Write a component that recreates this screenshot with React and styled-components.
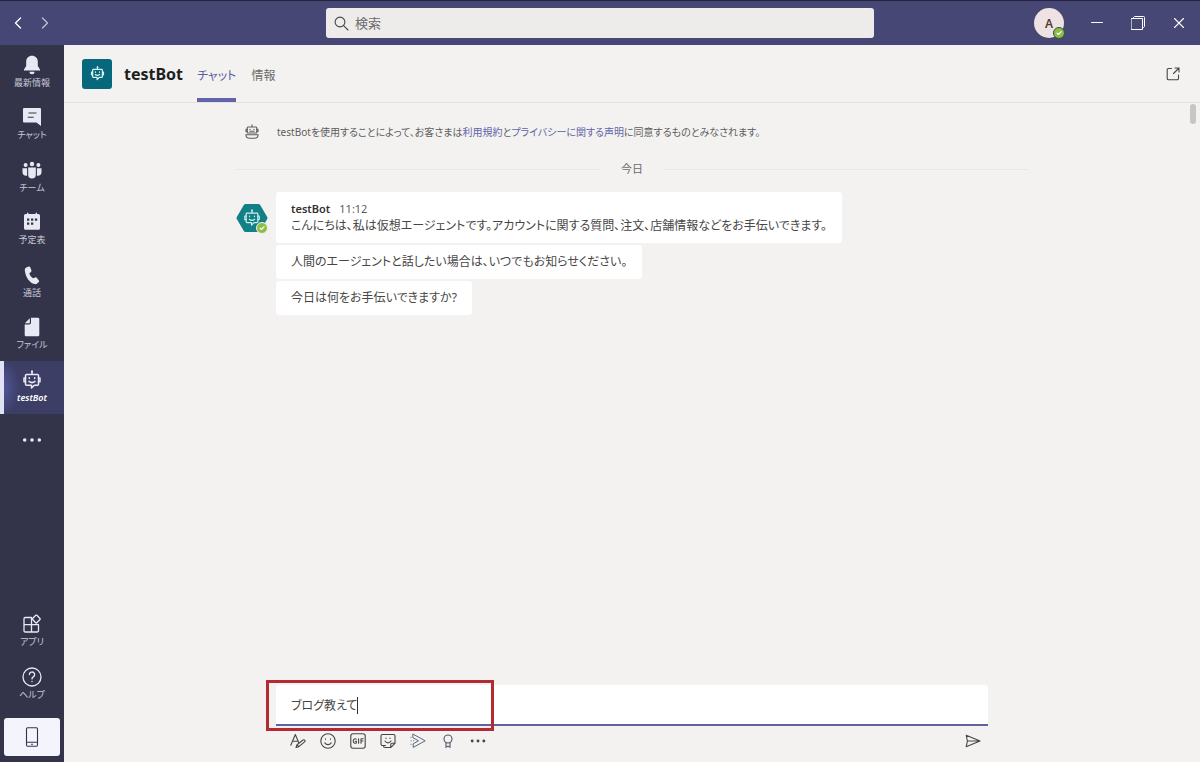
import { useState } from "react";
import styled, { createGlobalStyle } from "styled-components";

const GlobalStyle = createGlobalStyle`
  * {
    box-sizing: border-box;
  }
  body {
    margin: 0;
    background: #f3f2f1;
    color: #484644;
    font-family: "Noto Sans", "Noto Sans CJK JP", sans-serif;
    font-feature-settings: "palt";
    font-size: 12px;
  }
  button, input {
    font: inherit;
    font-feature-settings: inherit;
    color: inherit;
    border: 0;
    padding: 0;
    margin: 0;
    background: none;
  }
  a {
    color: #6264a7;
    text-decoration: none;
  }
  svg {
    display: block;
  }
`;

/* ---------- icons ---------- */

const Line = ({ size = 18, box = 20, width = 1.2, children }) => (
  <svg width={size} height={size} viewBox={`0 0 ${box} ${box}`} fill="none" stroke="currentColor" strokeWidth={width} strokeLinecap="round" strokeLinejoin="round" aria-hidden="true">
    {children}
  </svg>
);

const Solid = ({ size = 20, children }) => (
  <svg width={size} height={size} viewBox="0 0 20 20" fill="currentColor" aria-hidden="true">
    {children}
  </svg>
);

const BellIcon = () => (
  <Solid>
    <path d="M10 .8c-3.4 0-5.8 2.4-5.8 5.8v4.5L2 14.4v1h16v-1l-2.2-3.3V6.6C15.8 3.2 13.4.8 10 .8zM7.5 16.7a2.5 2.5 0 0 0 5 0z" />
  </Solid>
);

const ChatIcon = () => (
  <Solid>
    <path fillRule="evenodd" d="M2 1h16a1 1 0 0 1 1 1v17l-4.500-3.500H2a1 1 0 0 1-1-1V2a1 1 0 0 1 1-1zm4.500 4.600v1h8v-1zm-.800 4.200v1h6v-1z" />
  </Solid>
);

const TeamIcon = () => (
  <Solid>
    <circle cx="3.6" cy="5" r="2" />
    <circle cx="10" cy="4" r="2.2" />
    <circle cx="16.4" cy="5" r="2" />
    <path d="M6.200 7.500h7.600v7.300a3.800 3.800 0 0 1-7.600 0zM.5 8.300h4.600v7.400C2.300 16.200.5 14.500.5 12.200zM14.900 8.300h4.600v3.900c0 2.300-1.800 4-4.600 3.500z" />
  </Solid>
);

const CalendarIcon = () => (
  <Solid>
    <path fillRule="evenodd" d="M5 .8h1.400V2h7.200V.8H15V2h1.500A1.500 1.500 0 0 1 18 3.500v12.700a1.500 1.500 0 0 1-1.500 1.500h-13A1.500 1.500 0 0 1 2 16.200V3.500A1.500 1.500 0 0 1 3.500 2H5zM9 6.400v2.300h2.300V6.400zm3.900 0v2.300h2.300V6.400zM5 10.500v2.300h2.300v-2.300zm4 0v2.300h2.300v-2.300zM5 6.400v2.300h2.300V6.400z" />
  </Solid>
);

const PhoneIcon = () => (
  <Solid>
    <path d="M4.300 2.400 6.600 1.500c.7-.2 1.200 0 1.500.6l1.300 3.200c.2.600.1 1.100-.3 1.500L7.300 8.500c.7 2 1.900 3.500 3.700 4.700l2.200-.8c.6-.2 1.100-.1 1.500.4l2.200 2.700c.4.6.3 1.200-.2 1.600l-1.500 1.400c-.8.700-1.700.9-2.700.6C7.600 17.600 3.700 12.500 2.800 5.400c-.1-1.400.4-2.500 1.500-3z" />
  </Solid>
);

const FileIcon = () => (
  <Solid>
    <path d="M9 .8h7A1.300 1.300 0 0 1 17.300 2v16a1.300 1.300 0 0 1-1.300 1.300H4A1.300 1.300 0 0 1 2.700 18V7.600h4.500A1.800 1.800 0 0 0 9 5.800z" />
    <path d="M7.800 1.200v4.200a.9.900 0 0 1-.9.900H2.900z" />
  </Solid>
);

const BotIcon = ({ size = 20, width = 1.5 }) => (
  <Line size={size} width={width}>
    <path d="M10 1.200v3" />
    <circle cx="10" cy="1.600" r=".4" />
    <path d="M4.500 4.500h11a1 1 0 0 1 1 1v8.700a1 1 0 0 1-1 1h-3.200L9.500 18v-2.800h-5a1 1 0 0 1-1-1V5.500a1 1 0 0 1 1-1z" />
    <path d="M3.500 8H2v3.800h1.500M16.500 8H18v3.800h-1.500" />
    <path d="M7.300 7.800v.6M12.700 7.800v.6M7 11.400c1.700 1.400 4.300 1.400 6 0" />
  </Line>
);

const NoticeBotIcon = () => (
  <Line size={16} box={16} width={1.1}>
    <path d="M8 .8v2M4 3h8a.7.7 0 0 1 .7.700V9H3.300V3.700A.7.7 0 0 1 4 3zM3 5.200H2v2.200h1M13 5.200h1v2.200h-1" />
    <path d="M6 5.300v.4M10 5.300v.4M6 7.300h4" />
    <path d="M1.800 10.800h12.400c-.2 2.400-1.700 3.400-3.600 3.400H5.400c-1.900 0-3.400-1-3.600-3.400z" />
  </Line>
);

const DotsIcon = ({ size = 20 }) => (
  <Solid size={size}>
    <circle cx="2.700" cy="10" r="1.800" />
    <circle cx="10" cy="10" r="1.800" />
    <circle cx="17.300" cy="10" r="1.800" />
  </Solid>
);

const AppsIcon = () => (
  <Line size={20} width={1.3}>
    <path d="M9.500 3.500H3.200A1.200 1.200 0 0 0 2 4.700v12.100A1.200 1.200 0 0 0 3.200 18h12.100a1.200 1.200 0 0 0 1.200-1.200v-6.200H2M9.500 3.500V18" />
    <rect x="11.300" y="2" width="6" height="6" rx=".8" transform="rotate(45 14.300 5)" />
  </Line>
);

const HelpIcon = () => (
  <Line size={20} width={1.3}>
    <circle cx="10" cy="10" r="9" />
    <path d="M7.400 7.600a2.600 2.600 0 1 1 3.800 2.300c-.8.500-1.200 1-1.200 2M10 14.400v.3" />
  </Line>
);

const MobileIcon = () => (
  <Line size={20} width={1.1}>
    <rect x="4.500" y=".8" width="11" height="18.400" rx="1.200" />
    <path d="M4.500 15.200h11M9.500 17.200h1" />
  </Line>
);

const SearchIcon = () => (
  <Line size={15} box={15} width={1.1}>
    <circle cx="6" cy="6" r="4.900" />
    <path d="m9.600 9.600 4.400 4.400" />
  </Line>
);

const PopOutIcon = () => (
  <Line size={14} box={14} width={1.1}>
    <path d="M5.500 1.500h-3A1.300 1.300 0 0 0 1.200 2.800v8.700a1.300 1.300 0 0 0 1.300 1.300h8.700a1.300 1.300 0 0 0 1.300-1.300V8M7.500 6.500 13 1M9 1h4v4" />
  </Line>
);

const FormatIcon = () => (
  <Line size={16} box={16} width={1.1}>
    <path d="M.8 12.300 5.300 1.500l3.400 8M2.600 8.300H8M6 14.500l1-2.800 6-4.700c1.400-.8 2.700.7 1.600 1.900l-5.800 4.800zM7 11.700l1.800 2" />
  </Line>
);

const SmileIcon = () => (
  <Line size={16} box={16} width={1.1}>
    <circle cx="8" cy="8" r="7.200" />
    <path d="M5.500 5.800v.5M10.500 5.800v.5M4.800 9.900c1.700 2.300 4.700 2.300 6.400 0" />
  </Line>
);

const GifIcon = () => (
  <Line size={16} box={16} width={1.1}>
    <rect x=".8" y=".8" width="14.400" height="14.400" rx="2.200" />
    <path d="M6.300 6.200C5.200 5.200 3.200 5.900 3.200 8s2 2.800 3.200 1.900V8.200H5.200M8.600 5.800v4.400M11 10.200V5.800h2.200M11 8h1.900" />
  </Line>
);

const StickerIcon = () => (
  <Line size={16} box={16} width={1.1}>
    <path d="M2.500 1.500h11a1.500 1.500 0 0 1 1.500 1.500v7.300l-4.300 4.200H5A1.500 1.500 0 0 1 3.500 13M2.500 1.500A1.500 1.500 0 0 0 1 3v8a1.500 1.500 0 0 0 1.500 1.500h3M15 10.300h-2.800a1.500 1.500 0 0 0-1.500 1.500v2.700" />
    <path d="M6 5v.5M10 5v.5M5 8c1.500 2.500 4.500 2.500 6 0" />
  </Line>
);

const StreamIcon = () => (
  <Line size={16} box={16} width={1}>
    <path d="M3.200 1.200 15.200 7.800 3.200 14.400v-3.600l5.300-3-5.300-3zM1 4.300v.2M1 7.800h.2M3.600 7.800h.2M1 11.200v.2" />
  </Line>
);

const PraiseIcon = () => (
  <Line size={16} box={16} width={1.1}>
    <circle cx="8" cy="6" r="4" />
    <path d="M6 9.700v4.700l2-1.300 2 1.300V9.700" />
  </Line>
);

const SendIcon = () => (
  <Line size={16} box={16} width={1.1}>
    <path d="M1.200 2.200 15 8 1.200 13.800 2.400 8zM2.400 8H15" />
  </Line>
);

const Check = () => (
  <Line size={8} box={8} width={1.1}>
    <path d="m2 4.200 1.400 1.300L6.200 2.700" />
  </Line>
);

/* ---------- top bar ---------- */

const Shell = styled.div`
  min-height: 100vh;
  display: grid;
  grid-template-rows: auto 1fr;
`;

const TopBar = styled.header`
  display: grid;
  grid-template-columns: 1fr minmax(240px, 548px) 1fr;
  align-items: center;
  padding: 7px 0;
  background: #464775;
  border-top: 1px solid #24223f;
  color: #fff;
`;

const History = styled.div`
  display: flex;
  gap: 10px;
  padding-left: 9px;
`;

const BarButton = styled.button`
  width: 17px;
  height: 30px;
  display: grid;
  place-items: center;
  opacity: ${(props) => (props.$dim ? 0.65 : 1)};
`;

const Search = styled.label`
  display: flex;
  align-items: center;
  gap: 6px;
  height: 30px;
  padding: 0 8px;
  border-radius: 3px;
  background: #edecea;
  color: #484644;
`;

const SearchInput = styled.input`
  flex: 1;
  min-width: 0;
  font-size: 13px;
  outline: none;
  &::placeholder {
    color: #6d6b69;
    opacity: 1;
  }
`;

const WindowControls = styled.div`
  display: flex;
  align-items: center;
  justify-content: flex-end;
  gap: 24px;
  padding-right: 13px;
`;

const Avatar = styled.button`
  position: relative;
  width: 30px;
  height: 30px;
  border-radius: 50%;
  background: #eee3e2;
  color: #523c38;
  font-weight: 600;
`;

const Presence = styled.span`
  position: absolute;
  right: ${(props) => (props.$ring ? "-1px" : "0")};
  bottom: ${(props) => (props.$ring ? "-1px" : "0")};
  width: 12px;
  height: 12px;
  display: grid;
  place-items: center;
  border: 1px solid ${(props) => props.$ring || "#f3f2f1"};
  border-radius: 50%;
  background: #8cbd45;
  color: #fff;
`;

/* ---------- app rail ---------- */

const Body = styled.div`
  display: grid;
  grid-template-columns: 64px 1fr;
`;

const Rail = styled.nav`
  display: flex;
  flex-direction: column;
  justify-content: space-between;
  padding-top: 1px;
  background: #33344a;
  color: #e9e9f5;
`;

const RailGroup = styled.div`
  display: flex;
  flex-direction: column;
  height: ${(props) => props.$height};
`;

const RailButton = styled.button`
  flex: 1;
  display: flex;
  flex-direction: column;
  align-items: center;
  justify-content: center;
  gap: 1px;
  font-size: 9px;
  line-height: 14px;
  border-left: 4px solid ${(props) => (props.$active ? "#e2e2f6" : "transparent")};
  border-right: 4px solid transparent;
  font-weight: ${(props) => (props.$active ? 600 : 400)};
  font-style: ${(props) => (props.$active ? "italic" : "normal")};
  background: ${(props) => (props.$active ? "radial-gradient(ellipse 20px 28px at 0 50%, #5659a2, #3d3e66) border-box" : "none")};
  span {
    color: ${(props) => (props.$active ? "#fff" : "#c8c8d8")};
  }
`;

const MobileButton = styled.button`
  height: 38px;
  margin: 7px 4px 6px;
  display: grid;
  place-items: center;
  border-radius: 3px;
  background: #f4f4fc;
  color: #33344a;
`;

/* ---------- chat ---------- */

const Main = styled.main`
  display: grid;
  grid-template-rows: auto 1fr auto;
  min-width: 0;
`;

const ChatHeader = styled.div`
  display: flex;
  align-items: stretch;
  height: 58px;
  padding: 0 20px 0 18px;
  border-bottom: 1px solid #e4e2e0;
`;

const BotTile = styled.span`
  align-self: center;
  width: 30px;
  height: 30px;
  display: grid;
  place-items: center;
  border-radius: 3px;
  background: #06687a;
  color: #d5f3f4;
`;

const Title = styled.h1`
  align-self: center;
  margin: 0 14px 0 12px;
  font-size: 16px;
  line-height: 24px;
  font-weight: 700;
  color: #201f1f;
`;

const Tab = styled.button`
  margin-right: 15px;
  padding-top: 6px;
  border-bottom: 4px solid ${(props) => (props.$active ? "#6264a7" : "transparent")};
  color: ${(props) => (props.$active ? "#5b5d9e" : "#6d6b69")};
  font-size: 12px;
`;

const PopOut = styled.button`
  margin-left: auto;
`;

const Scroller = styled.div`
  display: flex;
  justify-content: flex-end;
  padding: 1px 4px 0 10px;
`;

const Column = styled.section`
  flex: 1;
  max-width: 792px;
  margin: 0 auto;
`;

const Thumb = styled.div`
  width: 6px;
  height: 20px;
  border-radius: 3px;
  background: #c8c6c4;
`;

const Notice = styled.p`
  display: flex;
  align-items: center;
  gap: 17px;
  margin: 18px 0 0 8px;
  font-size: 10px;
  line-height: 20px;
  color: #605e5c;
`;

const DayDivider = styled.div`
  display: flex;
  align-items: center;
  gap: 20px;
  margin: 18px 0 14px;
  font-size: 11px;
  line-height: 18px;
  color: #6d6b69;
  &::before,
  &::after {
    content: "";
    flex: 1;
    height: 1px;
    background: #e8e6e4;
  }
`;

const Thread = styled.div`
  display: flex;
  align-items: flex-start;
  gap: 8px;
`;

const Hexagon = styled.div`
  position: relative;
  width: 32px;
  height: 32px;
  margin-top: 10px;
`;

const HexagonBot = styled.div`
  position: absolute;
  inset: 7px;
  color: #cdeff0;
`;

const Bubbles = styled.div`
  display: flex;
  flex-direction: column;
  align-items: flex-start;
  gap: 2px;
`;

const Bubble = styled.div`
  padding: 8px 15px;
  border-radius: 3px;
  background: #fff;
  line-height: 18px;
  color: #484644;
`;

const Sender = styled.div`
  display: flex;
  gap: 9px;
  font-size: 11px;
  line-height: 17px;
  color: #605e5c;
  strong {
    font-weight: 600;
    color: #323130;
  }
`;

const Compose = styled.form`
  width: calc(100% - 80px);
  max-width: 712px;
  margin: 0 auto;
`;

const Field = styled.div`
  position: relative;
`;

const MessageInput = styled.input`
  display: block;
  width: 100%;
  height: 41px;
  padding: 0 15px;
  border-bottom: 2px solid #5f629f;
  border-radius: 3px 3px 0 0;
  background: #fff;
  color: #484644;
  outline: none;
  caret-color: transparent;
`;

const Caret = styled.span`
  position: absolute;
  left: 81px;
  top: 12px;
  width: 1px;
  height: 17px;
  background: #323130;
`;

const Highlight = styled.span`
  position: absolute;
  left: -10px;
  top: -5px;
  width: 228px;
  height: 51px;
  border: 3px solid #b32a31;
  pointer-events: none;
`;

const Toolbar = styled.div`
  display: flex;
  gap: 14px;
  padding: 7px 7px 13px 14px;
`;

const ToolButton = styled.button`
  width: 16px;
  height: 16px;
  color: ${(props) => props.$color || "#484644"};
  &:last-child {
    margin-left: auto;
  }
`;

const railItems = [
  { label: "最新情報", icon: <BellIcon /> },
  { label: "チャット", icon: <ChatIcon /> },
  { label: "チーム", icon: <TeamIcon /> },
  { label: "予定表", icon: <CalendarIcon /> },
  { label: "通話", icon: <PhoneIcon /> },
  { label: "ファイル", icon: <FileIcon /> },
  { label: "testBot", icon: <BotIcon />, active: true },
];

const footerItems = [
  { label: "アプリ", icon: <AppsIcon /> },
  { label: "ヘルプ", icon: <HelpIcon /> },
];

const tools = [
  { label: "書式", icon: <FormatIcon /> },
  { label: "絵文字", icon: <SmileIcon /> },
  { label: "GIF", icon: <GifIcon /> },
  { label: "ステッカー", icon: <StickerIcon /> },
  { label: "Stream", icon: <StreamIcon />, color: "#5d6680" },
  { label: "賞賛", icon: <PraiseIcon />, color: "#50546a" },
  { label: "その他", icon: <DotsIcon size={16} /> },
  { label: "送信", icon: <SendIcon /> },
];

const App = () => {
  const [message, setMessage] = useState("ブログ教えて");

  return (
    <Shell>
      <GlobalStyle />
      <TopBar>
        <History>
          <BarButton aria-label="戻る">
            <Line size={12} box={12} width={1.4}><path d="M8.500 1 3.500 6l5 5" /></Line>
          </BarButton>
          <BarButton aria-label="進む" $dim>
            <Line size={12} box={12} width={1.4}><path d="m3.500 1 5 5-5 5" /></Line>
          </BarButton>
        </History>
        <Search>
          <SearchIcon />
          <SearchInput type="search" placeholder="検索" aria-label="検索" />
        </Search>
        <WindowControls>
          <Avatar aria-label="アカウント A">
            A
            <Presence $ring="#3b4a4a"><Check /></Presence>
          </Avatar>
          <BarButton aria-label="最小化">
            <Line size={12} box={12} width={1}><path d="M.5 5.500h11" /></Line>
          </BarButton>
          <BarButton aria-label="元に戻す">
            <Line size={14} box={14} width={1}><path d="M.5 2.500h11v11H.5zM2.500 2.500v-1l1-1h9a1 1 0 0 1 1 1v9l-1 1h-1" /></Line>
          </BarButton>
          <BarButton aria-label="閉じる">
            <Line size={12} box={12} width={1.1}><path d="m1.500 1.500 9 9M10.500 1.500l-9 9" /></Line>
          </BarButton>
        </WindowControls>
      </TopBar>

      <Body>
        <Rail>
          <RailGroup $height="420px">
            {railItems.map((item) => (
              <RailButton key={item.label} $active={item.active}>
                {item.icon}
                <span>{item.label}</span>
              </RailButton>
            ))}
            <RailButton aria-label="その他のアプリ">
              <DotsIcon />
            </RailButton>
          </RailGroup>
          <div>
            <RailGroup $height="106px">
              {footerItems.map((item) => (
                <RailButton key={item.label}>
                  {item.icon}
                  <span>{item.label}</span>
                </RailButton>
              ))}
            </RailGroup>
            <RailGroup>
              <MobileButton aria-label="モバイル アプリ"><MobileIcon /></MobileButton>
            </RailGroup>
          </div>
        </Rail>

        <Main>
          <ChatHeader>
            <BotTile><BotIcon size={15} width={1.6} /></BotTile>
            <Title>testBot</Title>
            <Tab $active>チャット</Tab>
            <Tab>情報</Tab>
            <PopOut aria-label="新しいウィンドウで開く"><PopOutIcon /></PopOut>
          </ChatHeader>

          <Scroller>
            <Column>
              <Notice>
                <NoticeBotIcon />
                <span>
                  testBotを使用することによって、お客さまは<a href="#terms">利用規約</a>と<a href="#privacy">プライバシーに関する声明</a>に同意するものとみなされます。
                </span>
              </Notice>
              <DayDivider>今日</DayDivider>
              <Thread>
                <Hexagon>
                  <svg width="32" height="32" viewBox="0 0 32 32" fill="#138087" aria-hidden="true">
                    <path d="M9.500 2h13a2 2 0 0 1 1.700 1l7 12a2 2 0 0 1 0 2l-7 12a2 2 0 0 1-1.700 1h-13a2 2 0 0 1-1.700-1l-7-12a2 2 0 0 1 0-2l7-12a2 2 0 0 1 1.700-1z" />
                  </svg>
                  <HexagonBot><BotIcon size={18} width={1.3} /></HexagonBot>
                  <Presence><Check /></Presence>
                </Hexagon>
                <Bubbles>
                  <Bubble>
                    <Sender><strong>testBot</strong><time>11:12</time></Sender>
                    こんにちは、私は仮想エージェントです。アカウントに関する質問、注文、店舗情報などをお手伝いできます。
                  </Bubble>
                  <Bubble>人間のエージェントと話したい場合は、いつでもお知らせください。</Bubble>
                  <Bubble>今日は何をお手伝いできますか?</Bubble>
                </Bubbles>
              </Thread>
            </Column>
            <Thumb />
          </Scroller>

          <Compose onSubmit={(event) => event.preventDefault()}>
            <Field>
              <MessageInput aria-label="新しいメッセージ" value={message} onChange={(event) => setMessage(event.target.value)} />
              <Caret />
              <Highlight />
            </Field>
            <Toolbar>
              {tools.map((tool) => (
                <ToolButton key={tool.label} type="button" aria-label={tool.label} title={tool.label} $color={tool.color}>
                  {tool.icon}
                </ToolButton>
              ))}
            </Toolbar>
          </Compose>
        </Main>
      </Body>
    </Shell>
  );
};

export default App;
